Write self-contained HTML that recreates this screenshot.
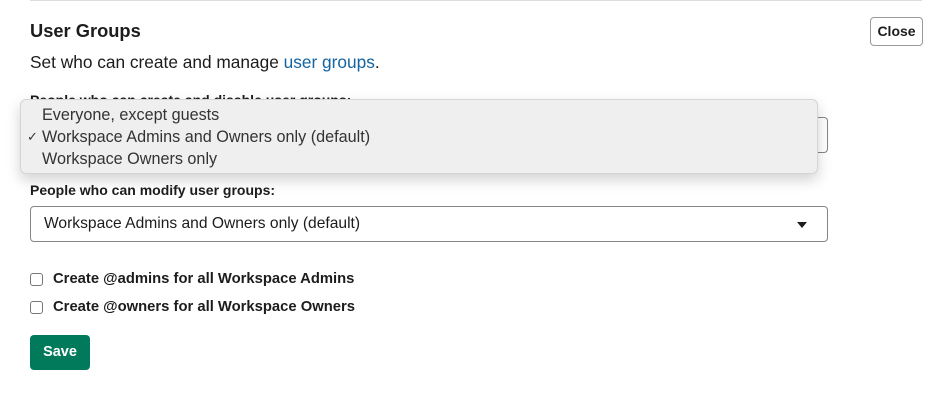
<!DOCTYPE html>
<html><head><style>
*{margin:0;padding:0;box-sizing:border-box}
body{width:948px;height:403px;background:#fff;font-family:"Liberation Sans",sans-serif;color:#1d1c1d;position:relative;overflow:hidden}
.abs{position:absolute}
.line{left:30px;top:0;width:892px;height:1px;background:#ddd}
h1{position:absolute;left:30px;top:20px;font-size:18.3px;font-weight:bold}
.desc{left:30px;top:52px;font-size:17.3px}
.desc a{color:#1264a3;text-decoration:none}
.lbl{font-size:14px;font-weight:bold;left:30px}
.sel{left:30px;width:798px;height:36px;border:1px solid #868686;border-radius:4px;font-size:15.6px;padding:8px 13px}
.arr{position:absolute;right:20px;top:15px;width:0;height:0;border-left:5px solid transparent;border-right:5px solid transparent;border-top:6px solid #1d1c1d}
.pop{left:20px;top:99px;width:798px;height:75px;background:#efefef;border:1px solid #d5d5d5;border-radius:6px;box-shadow:0 6px 14px rgba(0,0,0,.18);font-size:16.2px;color:#333;padding-top:4px}
.pop div{height:22px;line-height:22px;padding-left:21px;position:relative}
.chk{position:absolute;left:6px;font-size:13px}
.cb{left:30px;width:13px;height:13px;border:1px solid #777;border-radius:3px}
.cbl{left:53px;font-size:14.8px;font-weight:bold}
.save{left:30px;top:335px;width:60px;height:35px;background:#007a5a;border-radius:4px;color:#fff;font-weight:bold;font-size:14.5px;text-align:center;line-height:35px}
.close{left:870px;top:17px;width:53px;height:29px;border:1px solid #999;border-radius:4px;font-size:14px;font-weight:bold;text-align:center;line-height:27px}
</style></head><body>
<div class="abs line"></div>
<h1>User Groups</h1>
<div class="abs close">Close</div>
<div class="abs desc">Set who can create and manage <a>user groups</a>.</div>
<div class="abs lbl" style="top:92px">People who can create and disable user groups:</div>
<div class="abs sel" style="top:117px">Workspace Admins and Owners only (default)<span class="arr"></span></div>
<div class="abs pop">
<div>Everyone, except guests</div>
<div><span class="chk">✓</span>Workspace Admins and Owners only (default)</div>
<div>Workspace Owners only</div>
</div>
<div class="abs lbl" style="top:182px">People who can modify user groups:</div>
<div class="abs sel" style="top:206px">Workspace Admins and Owners only (default)<span class="arr"></span></div>
<div class="abs cb" style="top:273px"></div>
<div class="abs cbl" style="top:271px">Create @admins for all Workspace Admins</div>
<div class="abs cb" style="top:301px"></div>
<div class="abs cbl" style="top:299px">Create @owners for all Workspace Owners</div>
<div class="abs save">Save</div>
</body></html>
